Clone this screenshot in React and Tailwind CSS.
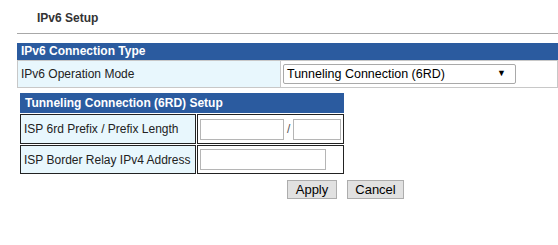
export default function App() {
  const font = { fontFamily: '"Liberation Sans", Arial, sans-serif' }
  return (
    <div className="w-[558px] h-[245px] bg-white overflow-hidden text-[#222]" style={font}>
      <div className="pl-[37px] pt-[9px] h-[33px] text-[12px] font-bold text-[#333]">IPv6 Setup</div>

      <div className="ml-[17px] border-t border-[#a8a8a8]" />

      {/* IPv6 Connection Type */}
      <div className="ml-[17px] mt-[9px]">
        <div className="h-[17px] bg-[#2b5b9f] text-white text-[12px] font-bold leading-[17px] pl-[4px]">
          IPv6 Connection Type
        </div>
        <div className="flex h-[28px]">
          <div className="w-[264px] bg-[#e8f7fd] border border-[#c8c8c8] flex items-center pl-[3px] text-[12px]">
            IPv6 Operation Mode
          </div>
          <div className="flex-1 border border-l-0 border-[#c8c8c8] flex items-center pl-[2px]">
            <div className="w-[233px] h-[20px] border border-[#a9a9a9] rounded-[2px] flex items-center justify-between pl-[3px] pr-[9px] text-[12.5px] text-black">
              <span>Tunneling Connection (6RD)</span>
              <span className="text-[9px]">▼</span>
            </div>
          </div>
        </div>
      </div>

      {/* Tunneling Connection (6RD) Setup */}
      <div className="ml-[20px] mt-[5px] w-[324px]">
        <div className="h-[20px] bg-[#2b5b9f] text-white text-[12px] font-bold leading-[20px] pl-[5px]">
          Tunneling Connection (6RD) Setup
        </div>
        <div className="flex flex-col gap-[1px] pt-[1px]">
          <div className="flex gap-[1px] h-[30px]">
            <div className="w-[176px] bg-[#e8f7fd] border border-[#222] flex items-center pl-[3px] text-[12px] whitespace-nowrap">
              ISP 6rd Prefix / Prefix Length
            </div>
            <div className="flex-1 border border-[#222] flex items-center pl-[2px]">
              <div className="w-[84px] h-[21px] border border-[#b5b5b5]" />
              <span className="text-[12px] text-[#555] px-[3px]">/</span>
              <div className="w-[48px] h-[21px] border border-[#b5b5b5]" />
            </div>
          </div>
          <div className="flex gap-[1px] h-[29px]">
            <div className="w-[176px] bg-[#e8f7fd] border border-[#222] flex items-center pl-[3px] text-[12px] whitespace-nowrap">
              ISP Border Relay IPv4 Address
            </div>
            <div className="flex-1 border border-[#222] flex items-center pl-[2px]">
              <div className="w-[126px] h-[21px] border border-[#b5b5b5]" />
            </div>
          </div>
        </div>
      </div>

      <div className="flex gap-[10px] pl-[287px] mt-[6px]">
        <button className="h-[19px] w-[50px] border border-[#adadad] bg-[#e1e1e1] text-[13px] text-black leading-none">Apply</button>
        <button className="h-[19px] w-[57px] border border-[#adadad] bg-[#e1e1e1] text-[13px] text-black leading-none">Cancel</button>
      </div>
    </div>
  )
}
